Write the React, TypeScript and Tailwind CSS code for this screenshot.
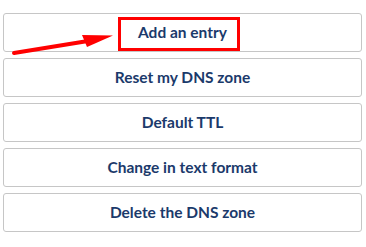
const actions = [
  "Add an entry",
  "Reset my DNS zone",
  "Default TTL",
  "Change in text format",
  "Delete the DNS zone",
]

export default function App() {
  return (
    <div className="relative w-[366px] h-[247px] bg-white pt-[13px] pl-[3px]" style={{ fontFamily: "Lato, 'Noto Sans', sans-serif" }}>
      <div className="flex flex-col gap-[6px] w-[359px]">
        {actions.map((label) => (
          <button
            key={label}
            className="h-[39px] w-full rounded-[3px] border border-[#c6c6c6] bg-white text-[15.5px] font-bold text-[#1b3a6b] flex items-center justify-center"
          >
            {label}
          </button>
        ))}
      </div>
      {/* annotation: highlight box + arrow */}
      <div className="absolute left-[118px] top-[17px] w-[122px] h-[34px] border-[3px] border-[#ff0000]" />
      <svg className="absolute left-0 top-0" width="366" height="247" viewBox="0 0 366 247">
        <line x1="14" y1="53" x2="88" y2="41" stroke="#ff0000" strokeWidth="4" strokeLinecap="round" />
        <polygon points="82,35 113,35.5 87,47" fill="#ff0000" />
      </svg>
    </div>
  )
}
